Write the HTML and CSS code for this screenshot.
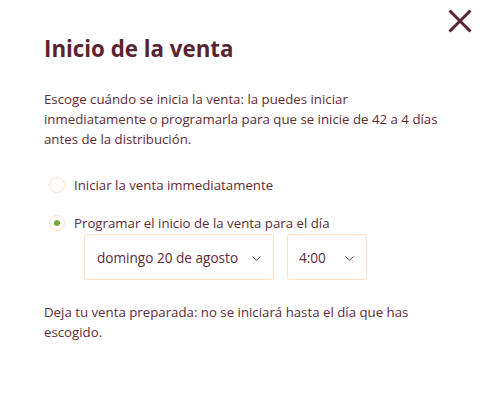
FILE: index.html
```html
<!DOCTYPE html>
<html lang="es">
<head>
    <meta charset="UTF-8">
    <meta name="viewport" content="width=device-width, initial-scale=1.0">
    <title>Inicio de la venta</title>
    <link rel="stylesheet" href="styles.css">
</head>
<body>
    <div class="dialog">
        <div class="dialog-top">
            <button class="close" type="button" aria-label="Cerrar">
                <svg width="24" height="24" viewBox="0 0 24 24">
                    <path d="M1.5 1.5 L22.5 22.5 M22.5 1.5 L1.5 22.5" />
                </svg>
            </button>
        </div>

        <div class="content">
            <h1 class="title">Inicio de la venta</h1>
            <p class="intro">Escoge cuándo se inicia la venta: la puedes iniciar inmediatamente o programarla para que se inicie de 42 a 4 días antes de la distribución.</p>

            <div class="options">
                <label class="option">
                    <span class="radio"></span>
                    Iniciar la venta immediatamente
                </label>
                <label class="option option-scheduled">
                    <span class="radio checked"></span>
                    Programar el inicio de la venta para el día
                </label>

                <div class="pickers">
                    <div class="select select-date">
                        <span>domingo 20 de agosto</span>
                        <svg class="chevron" width="9" height="5" viewBox="0 0 9 5">
                            <polyline points="0.5,0.5 4.5,4.3 8.5,0.5" />
                        </svg>
                    </div>
                    <div class="select select-time">
                        <span>4:00</span>
                        <svg class="chevron" width="9" height="5" viewBox="0 0 9 5">
                            <polyline points="0.5,0.5 4.5,4.3 8.5,0.5" />
                        </svg>
                    </div>
                </div>
            </div>

            <p class="note">Deja tu venta preparada: no se iniciará hasta el día que has escogido.</p>
        </div>
    </div>
</body>
</html>
```
FILE: styles.css
```css
body {
    margin: 0;
    background: #ffffff;
    font-family: "Open Sans", "Noto Sans", sans-serif;
    color: #5e2c36;
}

.dialog {
    padding: 9px 24px 40px 44px;
}

.dialog-top {
    display: flex;
    justify-content: flex-end;
}

.close {
    width: 24px;
    height: 24px;
    padding: 0;
    border: none;
    background: none;
    cursor: pointer;
    display: block;
}

.close svg {
    display: block;
}

.close path {
    stroke: #5a2330;
    stroke-width: 3;
    fill: none;
}

.content {
    max-width: 408px;
}

.title {
    margin: 1px 0 0;
    font-size: 22.3px;
    line-height: 30px;
    font-weight: 700;
    color: #5a2330;
}

.intro, .note {
    font-size: 13.25px;
    line-height: 20px;
    margin: 0;
}

.intro {
    margin-top: 25px;
    max-width: 395px;
}

.options {
    margin-top: 26px;
}

.option {
    display: flex;
    align-items: center;
    gap: 9px;
    font-size: 13.25px;
    line-height: 20px;
    cursor: pointer;
}

.option-scheduled {
    margin-top: 18px;
}

.radio {
    width: 16px;
    height: 16px;
    margin-left: 5px;
    box-sizing: border-box;
    border: 1.5px solid #fde3ca;
    border-radius: 50%;
    display: flex;
    align-items: center;
    justify-content: center;
}

.radio.checked::after {
    content: "";
    width: 6px;
    height: 6px;
    border-radius: 50%;
    background: #78a83c;
}

.pickers {
    display: flex;
    gap: 13px;
    margin: 1px 0 0 40px;
}

.select {
    height: 46px;
    box-sizing: border-box;
    border: 1px solid #fbe1c6;
    border-radius: 3px;
    padding: 1px 12px 0;
    display: flex;
    align-items: center;
    justify-content: space-between;
    font-size: 13.6px;
    line-height: 20px;
}

.select-date {
    width: 190px;
}

.select-time {
    width: 80px;
    padding-left: 11px;
}

.chevron {
    display: block;
    margin-top: 1px;
}

.chevron polyline {
    fill: none;
    stroke: #6a3a43;
    stroke-width: 1;
}

.note {
    margin-top: 22px;
}
```
